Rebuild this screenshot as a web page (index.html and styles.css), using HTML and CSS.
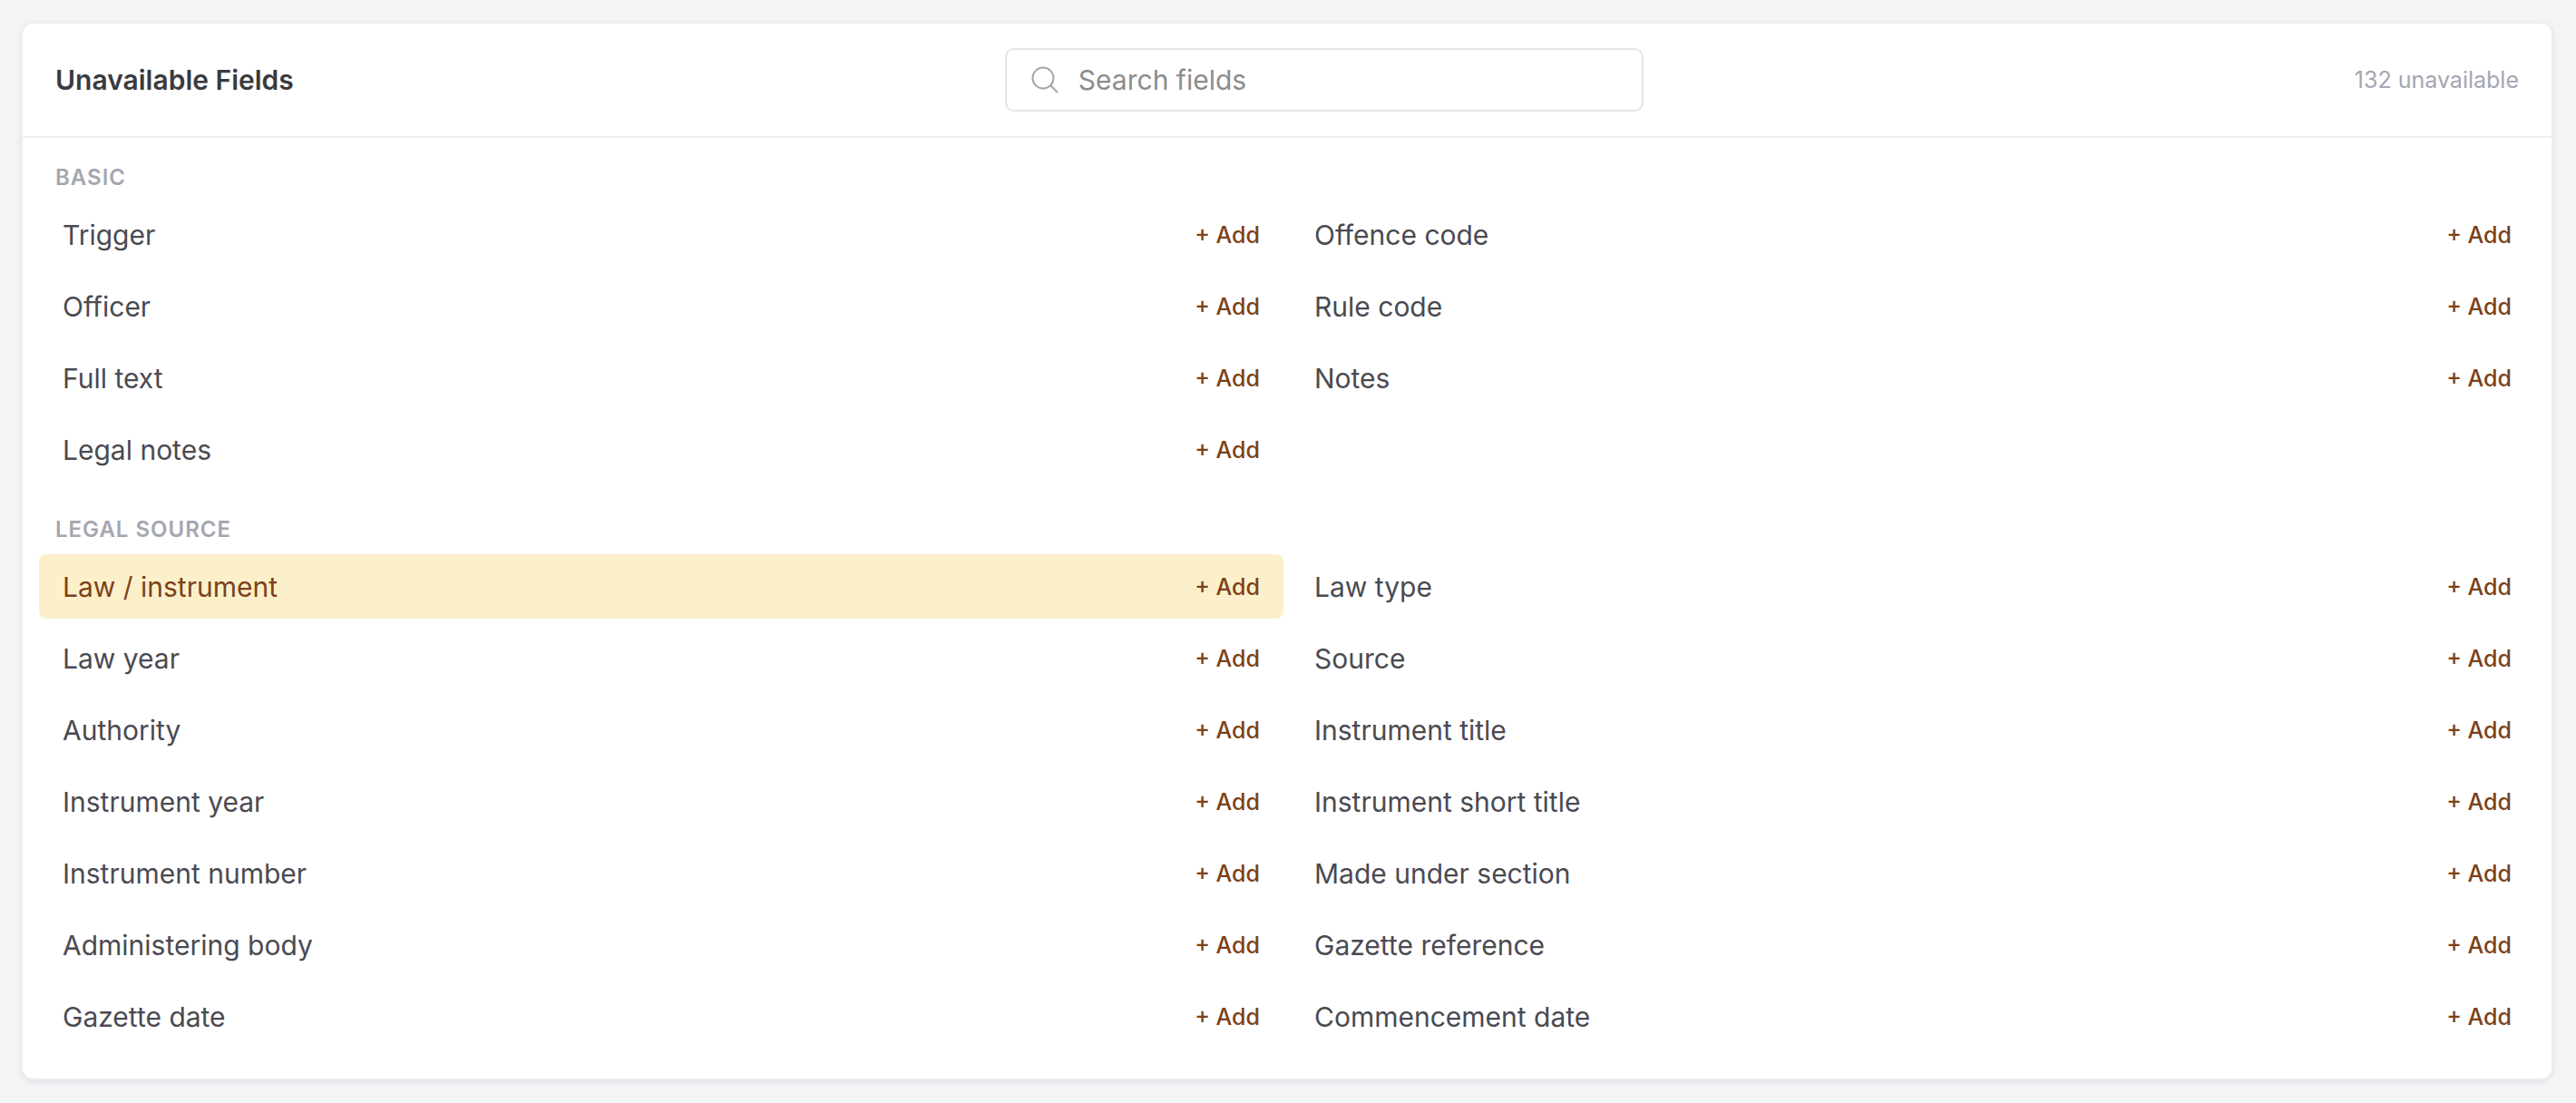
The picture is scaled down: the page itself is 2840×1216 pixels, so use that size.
FILE: index.html
```
<!DOCTYPE html>
<html lang="en">
	<head>
		<meta charset="utf-8">
		<title>Unavailable Fields</title>
		<link rel="stylesheet" href="styles.css">
	</head>
	<body>
		<div class="panel">
			<div class="panel-header">
				<h2>Unavailable Fields</h2>
				<label class="search">
					<svg class="search-icon" viewBox="0 0 30 30" aria-hidden="true">
						<circle cx="13" cy="13" r="11.5"/>
						<path d="M21.2 21.2L28.5 28.5"/>
					</svg>
					<input type="text" placeholder="Search fields" aria-label="Search fields">
				</label>
				<span class="count">132 unavailable</span>
			</div>

			<div class="panel-body">
				<div class="group">
					<h3>BASIC</h3>
					<ul class="fields">
						<li><span>Trigger</span><button type="button">+ Add</button></li>
						<li><span>Offence code</span><button type="button">+ Add</button></li>
						<li><span>Officer</span><button type="button">+ Add</button></li>
						<li><span>Rule code</span><button type="button">+ Add</button></li>
						<li><span>Full text</span><button type="button">+ Add</button></li>
						<li><span>Notes</span><button type="button">+ Add</button></li>
						<li><span>Legal notes</span><button type="button">+ Add</button></li>
					</ul>
				</div>

				<div class="group">
					<h3>LEGAL SOURCE</h3>
					<ul class="fields">
						<li class="active"><span>Law / instrument</span><button type="button">+ Add</button></li>
						<li><span>Law type</span><button type="button">+ Add</button></li>
						<li><span>Law year</span><button type="button">+ Add</button></li>
						<li><span>Source</span><button type="button">+ Add</button></li>
						<li><span>Authority</span><button type="button">+ Add</button></li>
						<li><span>Instrument title</span><button type="button">+ Add</button></li>
						<li><span>Instrument year</span><button type="button">+ Add</button></li>
						<li><span>Instrument short title</span><button type="button">+ Add</button></li>
						<li><span>Instrument number</span><button type="button">+ Add</button></li>
						<li><span>Made under section</span><button type="button">+ Add</button></li>
						<li><span>Administering body</span><button type="button">+ Add</button></li>
						<li><span>Gazette reference</span><button type="button">+ Add</button></li>
						<li><span>Gazette date</span><button type="button">+ Add</button></li>
						<li><span>Commencement date</span><button type="button">+ Add</button></li>
					</ul>
				</div>
			</div>
		</div>
	</body>
</html>
```
FILE: styles.css
```
* {
	box-sizing: border-box;
}
body {
	margin: 0;
	padding: 26px 27px 26px 25px;
	background-color: #f3f4f6;
	font-family: "Inter", sans-serif;
	font-size: 30px;
	color: #4a4a52;
}
.panel {
	background-color: white;
	border-radius: 12px;
	box-shadow: 0 0 0 2px #ededf0, 0 2px 6px 1px rgba(24, 24, 40, 0.1);
}
.panel-header {
	display: flex;
	align-items: center;
	justify-content: space-between;
	gap: 24px;
	padding: 27px 36px;
	border-bottom: 2px solid #f0f0f2;
}
.panel-header h2 {
	margin: 0;
	font-size: 30px;
	font-weight: 600;
	color: #3a3a40;
}
.search {
	display: flex;
	align-items: center;
	gap: 22px;
	flex: 0 1 704px;
	height: 70px;
	padding: 0 27px;
	border: 2px solid #e4e4ea;
	border-radius: 10px;
}
.search-icon {
	flex: none;
	width: 30px;
	height: 30px;
	fill: none;
	stroke: #a4a5af;
	stroke-width: 2;
	stroke-linecap: round;
}
.search input {
	flex: 1;
	min-width: 0;
	padding: 0;
	border: none;
	outline: none;
	background: none;
	font: inherit;
}
.search input::placeholder {
	color: #8c8c8c;
	opacity: 1;
}
.count {
	font-size: 25px;
	color: #a5a6b2;
}
.panel-body {
	padding: 26px 18px 33px;
}
.group + .group {
	margin-top: 35px;
}
.group h3 {
	margin: 0 0 9px;
	padding: 0 18px;
	font-size: 24px;
	line-height: 36px;
	font-weight: 600;
	letter-spacing: 1px;
	color: #a5a6b0;
}
.fields {
	display: grid;
	grid-template-columns: 1fr 1fr;
	gap: 8px;
	margin: 0;
	padding: 0;
	list-style: none;
}
.fields li {
	display: flex;
	align-items: center;
	justify-content: space-between;
	height: 71px;
	padding: 0 26px;
	border-radius: 8px;
}
.fields button {
	padding: 0;
	border: none;
	background: none;
	font-family: inherit;
	font-size: 25px;
	font-weight: 500;
	color: #7c4118;
	cursor: pointer;
}
.fields .active {
	background-color: #fcf0cb;
	color: #7c4118;
}
```
